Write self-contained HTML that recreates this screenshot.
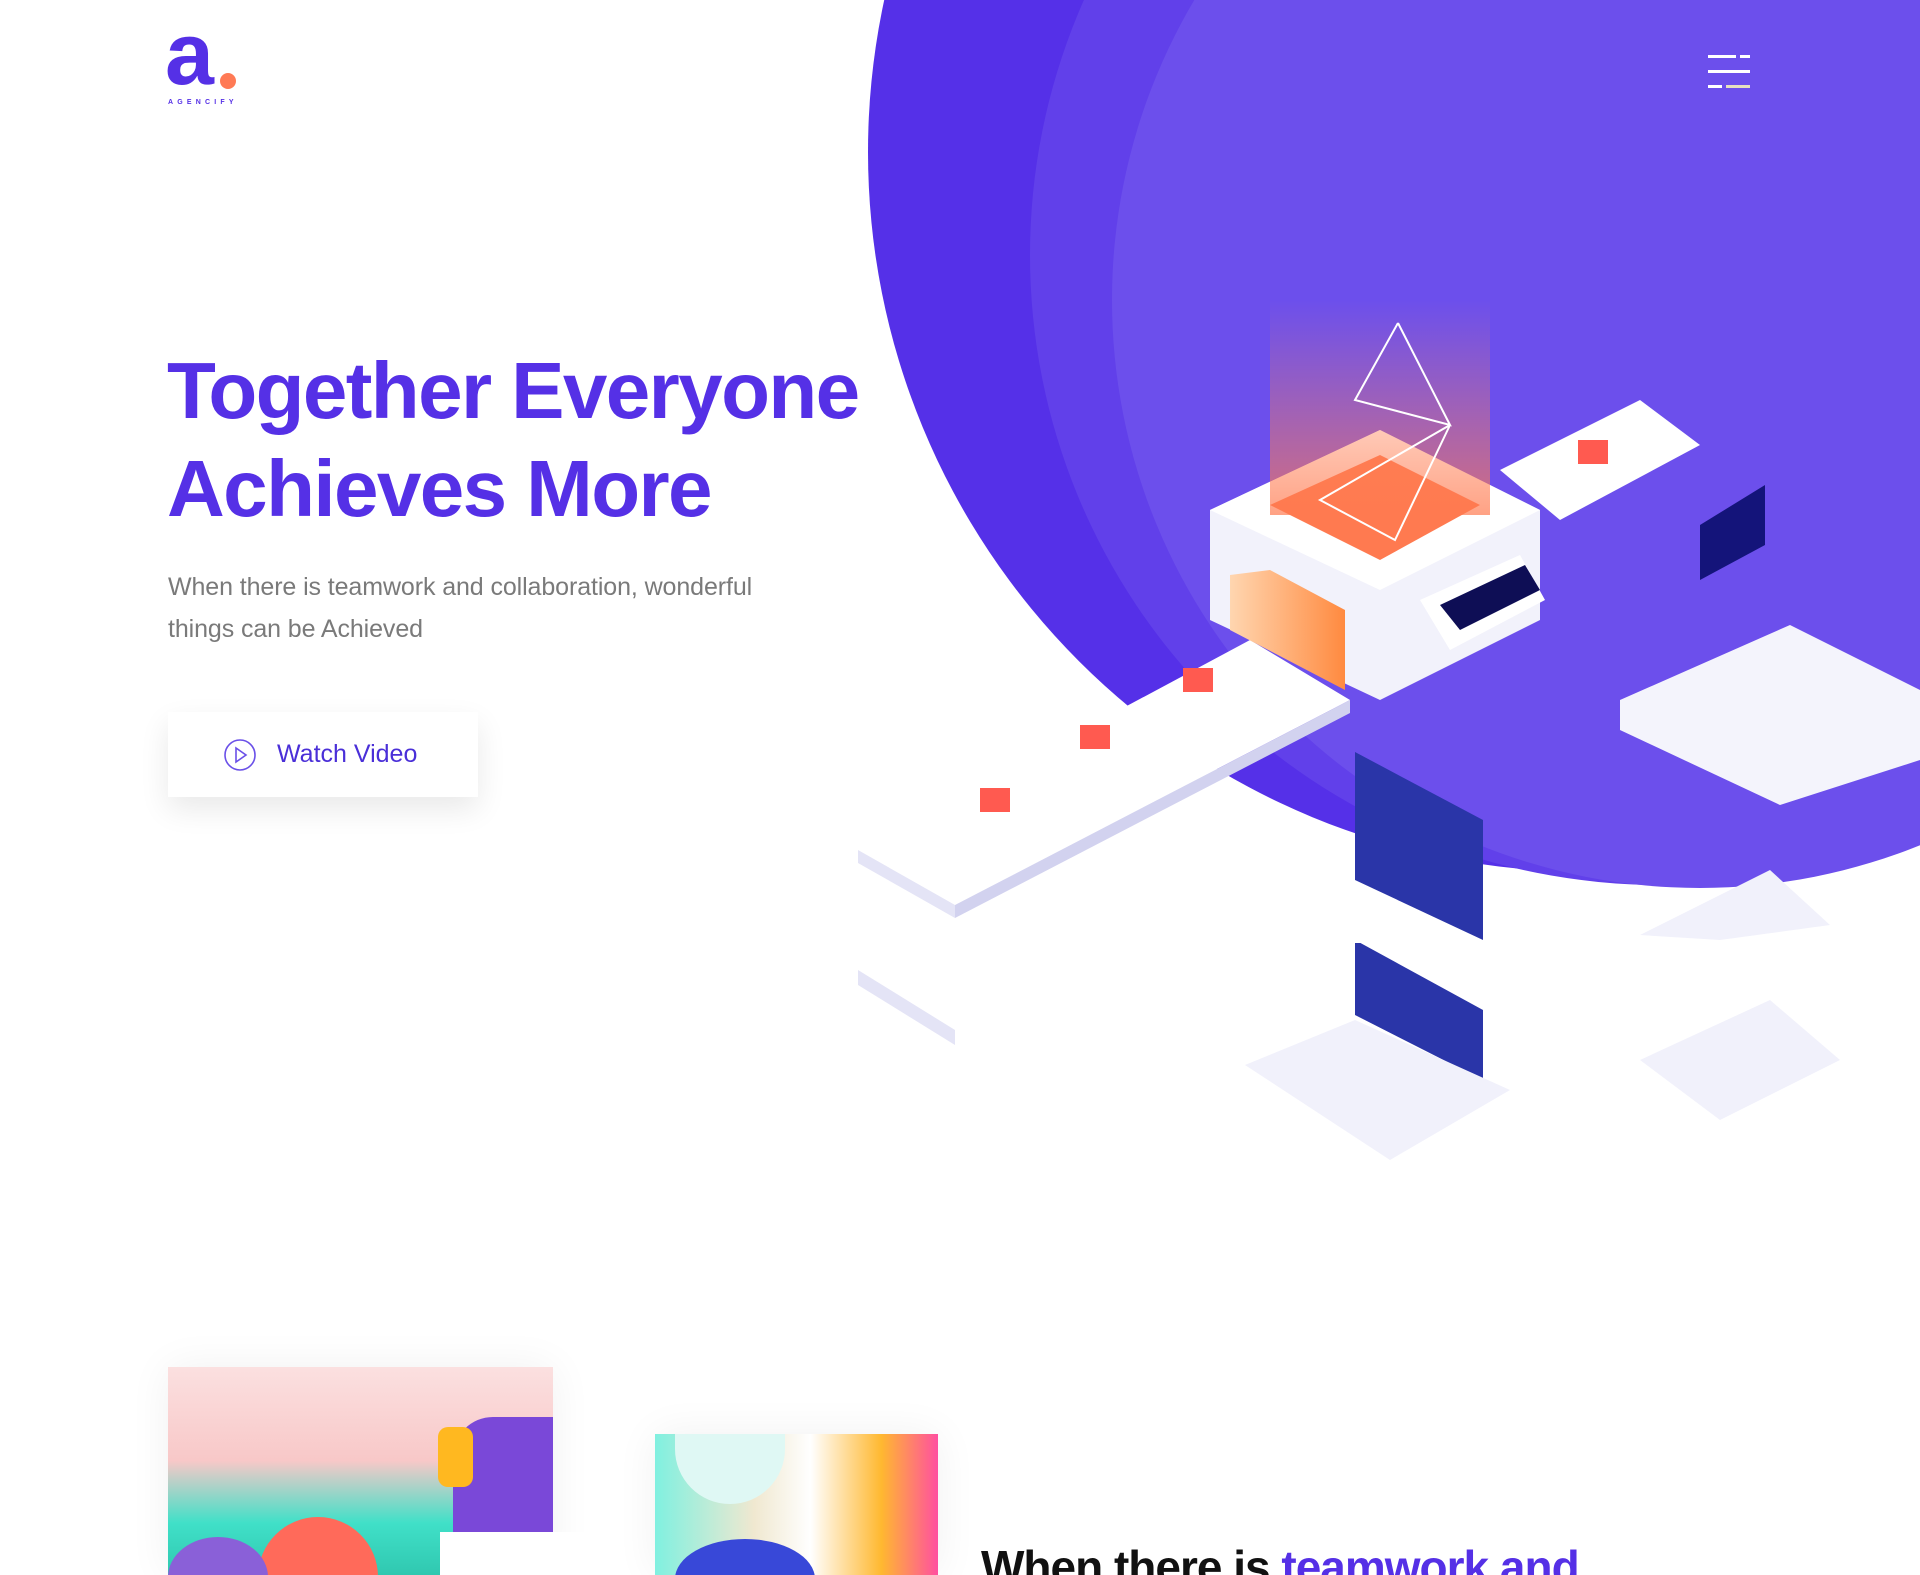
<!DOCTYPE html>
<html style="overflow:hidden;height:1575px"><head><meta charset="utf-8"><style>
*{margin:0;padding:0;box-sizing:border-box}
body{width:1920px;height:1575px;overflow:hidden;background:#fff;font-family:"Liberation Sans",Arial,sans-serif;position:relative}
.abs{position:absolute}
h1{position:absolute;left:167px;top:342px;font-size:80px;line-height:98px;font-weight:700;color:#5530e6;letter-spacing:-1.6px}
.p{position:absolute;left:168px;top:566px;font-size:25px;line-height:42px;color:#7a7a7a;letter-spacing:-0.1px}
.btn{position:absolute;left:168px;top:712px;width:310px;height:85px;background:#fff;box-shadow:0 12px 30px rgba(0,0,0,.09);display:flex;align-items:center;padding-left:55px;color:#4a2fd8;font-size:25px}
</style></head><body>
<svg class="abs" style="left:0;top:0" width="1920" height="1300">
<defs>
<linearGradient id="g1" x1="0" y1="0" x2="0" y2="1"><stop offset="0" stop-color="#ff8a5c" stop-opacity="0"/><stop offset="1" stop-color="#ff7a50"/></linearGradient>
<linearGradient id="g2" x1="0" y1="0" x2="1" y2="0"><stop offset="0" stop-color="#ffd6b0"/><stop offset="1" stop-color="#ff8a40"/></linearGradient>
</defs>
<circle cx="1588" cy="152" r="720" fill="#5530e8"/>
<circle cx="1660" cy="255" r="630" fill="#6140ea"/>
<circle cx="1700" cy="300" r="588" fill="#6c4fec"/>
<polygon points="858,850 1250,640 1350,700 955,905" fill="#fff"/>
<polygon points="858,850 955,905 955,918 858,863" fill="#e4e4f6"/>
<polygon points="955,905 1350,700 1350,713 955,918" fill="#d2d2ef"/>
<polygon points="1500,470 1640,400 1700,445 1560,520" fill="#fff"/>
<polygon points="1210,510 1380,430 1540,510 1540,620 1380,700 1210,620" fill="#f2f2fb"/>
<polygon points="1210,510 1380,590 1540,510 1380,430" fill="#fff"/>
<polygon points="1270,505 1380,455 1480,505 1380,560" fill="#ff7a50"/>
<rect x="1270" y="300" width="220" height="215" fill="url(#g1)" opacity=".7"/>
<polygon points="1230,575 1270,570 1345,610 1345,690 1230,630" fill="url(#g2)"/>
<polyline points="1398,323 1355,400 1450,425 1398,323" fill="none" stroke="#fff" stroke-width="2"/>
<polyline points="1450,425 1320,500 1395,540 1450,425" fill="none" stroke="#fff" stroke-width="2"/>
<polygon points="1420,600 1520,555 1545,600 1450,650" fill="#fff"/>
<polygon points="1440,605 1525,565 1540,590 1460,630" fill="#0e0e55"/>
<rect x="980" y="788" width="30" height="24" fill="#ff5a50"/>
<rect x="1080" y="725" width="30" height="24" fill="#ff5a50"/>
<rect x="1183" y="668" width="30" height="24" fill="#ff5a50"/>
<rect x="1578" y="440" width="30" height="24" fill="#ff5a50"/>
<polygon points="1620,700 1790,625 1920,690 1920,760 1780,805 1620,730" fill="#f4f4fc"/>
<polygon points="1700,525 1765,485 1765,545 1700,580" fill="#14147a"/>
<polygon points="1355,752 1483,820 1483,940 1355,880" fill="#2a35a8"/>
<polygon points="1640,935 1770,870 1830,925 1720,940" fill="#f1f1fb"/>
<polygon points="858,985 1200,810 1230,830 955,1045" fill="#fff"/>
<polygon points="858,970 955,1030 955,1045 858,985" fill="#e4e4f6"/>
<polygon points="1355,940 1483,1010 1483,1080 1355,1015" fill="#2a35a8"/>
<polygon points="1245,1065 1355,1020 1510,1090 1390,1160" fill="#f1f1fb"/>
<polygon points="1640,1060 1770,1000 1840,1060 1720,1120" fill="#f1f1fb"/>
<rect x="850" y="940" width="1070" height="3" fill="#fff"/>
</svg>
<div class="abs" style="left:165px;top:10px;font-size:88px;line-height:88px;font-weight:700;color:#5530e6;letter-spacing:-2px">a</div>
<div class="abs" style="left:220px;top:73px;width:16px;height:16px;border-radius:50%;background:#ff7a55"></div>
<div class="abs" style="left:168px;top:99px;font-size:7px;font-weight:700;color:#5530e6;letter-spacing:4.2px">AGENCIFY</div>
<div class="abs" style="left:1708px;top:55px;width:28px;height:3px;background:#fff"></div>
<div class="abs" style="left:1740px;top:55px;width:10px;height:3px;background:#fff"></div>
<div class="abs" style="left:1708px;top:70px;width:42px;height:3px;background:#fff"></div>
<div class="abs" style="left:1708px;top:85px;width:14px;height:3px;background:#fff"></div>
<div class="abs" style="left:1726px;top:85px;width:24px;height:3px;background:#e6e0c0"></div>
<h1>Together Everyone<br>Achieves More</h1>
<div class="p">When there is teamwork and collaboration, wonderful<br>things can be Achieved</div>
<div class="btn"><svg width="34" height="34" viewBox="0 0 34 34" style="margin-right:20px"><circle cx="17" cy="17" r="15" fill="none" stroke="#6a50e8" stroke-width="1.6"/><path d="M13 10 L23 17 L13 24 Z" fill="none" stroke="#6a50e8" stroke-width="1.6"/></svg>Watch Video</div>
<div class="abs" style="left:168px;top:1367px;width:385px;height:208px;overflow:hidden;background:linear-gradient(180deg,#fbe0e0 0%,#f8c8c8 45%,#40e0c8 75%,#30c8b0 100%);box-shadow:0 0 40px rgba(0,0,0,.06)">
<div class="abs" style="left:90px;top:150px;width:120px;height:120px;border-radius:50%;background:#ff6a5a"></div>
<div class="abs" style="left:0;top:170px;width:100px;height:80px;border-radius:50%;background:#8a60d8"></div>
<div class="abs" style="left:285px;top:50px;width:100px;height:150px;background:#7a48d8;border-radius:40px 0 0 0"></div>
<div class="abs" style="left:270px;top:60px;width:35px;height:60px;background:#ffb820;border-radius:10px"></div>
</div>
<div class="abs" style="left:440px;top:1532px;width:215px;height:43px;background:#fff"></div>
<div class="abs" style="left:655px;top:1434px;width:283px;height:141px;overflow:hidden;background:linear-gradient(90deg,#80f0e0 0%,#f0e8d0 35%,#fff 55%,#ffb830 80%,#ff50a0 100%);box-shadow:0 0 40px rgba(0,0,0,.06)">
<div class="abs" style="left:20px;top:0;width:110px;height:70px;border-radius:0 0 60px 60px;background:#dff8f4"></div>
<div class="abs" style="left:20px;top:105px;width:140px;height:80px;border-radius:50%;background:#3848d8"></div>
</div>
<div class="abs" style="left:981px;top:1540px;font-size:46px;font-weight:700;color:#111;letter-spacing:-1px;white-space:nowrap">When there is <span style="color:#5530e6">teamwork and</span></div>
</body></html>
